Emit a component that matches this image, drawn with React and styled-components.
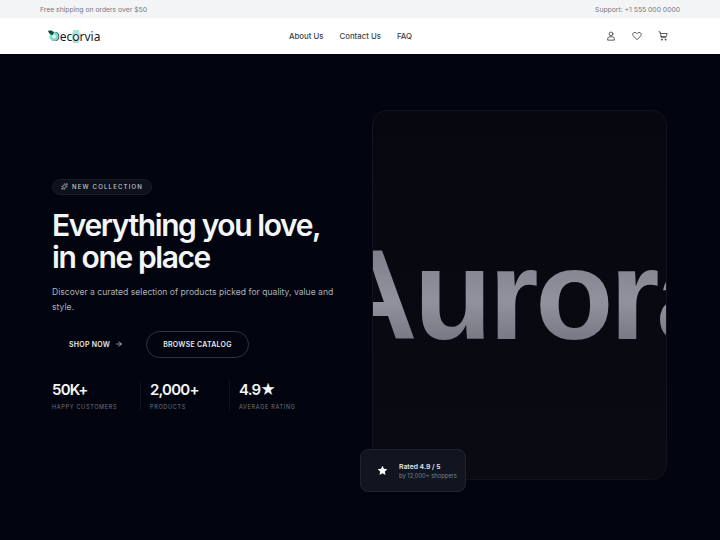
import React from 'react'
import styled, { createGlobalStyle } from 'styled-components'
import { ArrowRight, Sparkles } from 'lucide-react'

const Global = createGlobalStyle`
  html, body { margin: 0; padding: 0; }
  body { font-family: Inter, "Liberation Sans", sans-serif; background: #02050f; }
  * { box-sizing: border-box; }
`

const Page = styled.div`
  width: 720px;
  height: 540px;
  overflow: hidden;
  display: flex;
  flex-direction: column;
`
const TopBar = styled.div`
  height: 18px;
  flex: none;
  padding: 0 40px;
  display: flex;
  align-items: center;
  justify-content: space-between;
  background: #f3f4f6;
  color: #74787f;
  font-size: 6.8px;
`
const Nav = styled.nav`
  height: 36px;
  flex: none;
  padding: 0 52px 0 48px;
  display: grid;
  grid-template-columns: 241px auto 1fr;
  align-items: center;
  background: #fff;
`
const Logo = styled.div`
  position: relative;
  display: flex;
  align-items: center;
  width: 52px;
  padding-left: 3px;
  font-family: "Noto Sans", sans-serif;
  font-size: 12px;
  color: #16181d;
  svg { position: absolute; left: -1px; top: 0; }
`
const LogoDot = styled.span`
  border-radius: 50%;
  background: radial-gradient(circle, #fff 0 30%, #a5e6d5 32% 70%, transparent 72%);
`
const Links = styled.div`
  display: flex;
  gap: 16px;
  a {
    font-size: 7.8px;
    font-weight: 500;
    color: #3b3f46;
    text-decoration: none;
  }
`
const NavIcons = styled.div`
  display: flex;
  justify-content: flex-end;
  gap: 16px;
  color: #27272a;
`
const Hero = styled.main`
  flex: 1;
  display: grid;
  grid-template-columns: 320px 295px;
  justify-content: space-between;
  align-items: center;
  padding: 56px 53px 60px 52px;
  background: #02050f;
`
const Copy = styled.div`
  display: flex;
  flex-direction: column;
  align-items: flex-start;
  margin-top: -2px;
`
const Badge = styled.div`
  height: 16px;
  padding: 0 8px;
  display: flex;
  align-items: center;
  gap: 4px;
  border-radius: 8px;
  background: #0d111b;
  border: 1px solid #191d28;
  color: #c6c8ce;
  font-size: 6px;
  font-weight: 500;
  letter-spacing: 1.2px;
`
const Title = styled.h1`
  margin: 14px 0 0;
  font-size: 30px;
  line-height: 32px;
  font-weight: 600;
  letter-spacing: -1.4px;
  color: #f4f5f7;
`
const Lead = styled.p`
  margin: 12px 0 0;
  width: 290px;
  font-size: 8.6px;
  line-height: 15px;
  color: #adb0b8;
`
const Actions = styled.div`
  margin-top: 16px;
  display: flex;
  align-items: center;
  gap: 6px;
`
const Button = styled.a`
  height: 27px;
  padding: 0 16px;
  display: flex;
  align-items: center;
  gap: 5px;
  border-radius: 14px;
  border: 1px solid ${p => (p.$outline ? '#30343f' : 'transparent')};
  color: #e5e7eb;
  font-size: 7px;
  font-weight: 600;
  letter-spacing: 0.25px;
`
const Stats = styled.div`
  margin-top: 23px;
  display: grid;
  grid-template-columns: 89px 89px auto;
`
const Stat = styled.div`
  border-right: 1px solid #11141d;
  & + & { padding-left: 9px; }
  &:last-child { border: 0; }
  strong {
    display: block;
    font-size: 15px;
    line-height: 18px;
    font-weight: 600;
    letter-spacing: -0.8px;
    color: #f4f5f7;
  }
  span {
    display: block;
    margin-top: 5px;
    font-size: 5.5px;
    letter-spacing: 0.7px;
    color: #70747f;
  }
`
const Visual = styled.div`
  position: relative;
  height: 370px;
`
const Frame = styled.div`
  height: 100%;
  padding-left: 10px;
  border-radius: 15px;
  border: 1px solid #10141c;
  background: linear-gradient(180deg, #06070f, #0a0b12);
  overflow: hidden;
  display: flex;
  align-items: center;
  justify-content: center;
`
const Word = styled.div`
  font-family: "Liberation Sans", sans-serif;
  font-size: 128px;
  font-weight: 700;
  line-height: 1;
  letter-spacing: -0.027em;
  background: linear-gradient(180deg, #80808c 15%, #92929e 55%, #797985 85%);
  -webkit-background-clip: text;
  background-clip: text;
  -webkit-text-fill-color: transparent;
`
const RatingCard = styled.div`
  position: absolute;
  left: -12px;
  bottom: -12px;
  width: 106px;
  height: 43px;
  padding-left: 16px;
  display: flex;
  align-items: center;
  gap: 11px;
  border-radius: 8px;
  border: 1px solid #1f2430;
  background: #10151f;
`
const RatingText = styled.div`
  b {
    display: block;
    font-size: 6.8px;
    font-weight: 600;
    color: #e5e7eb;
  }
  span {
    display: block;
    margin-top: 1px;
    font-size: 5.8px;
    color: #7c8190;
  }
`

function LogoMark() {
  return (
    <svg width="13" height="14" viewBox="0 0 13 14" aria-hidden="true">
      <circle cx="7" cy="8.5" r="4.5" fill="#7fdcc4" />
      <circle cx="7" cy="8.5" r="2" fill="#d6f5ec" />
      <path d="M1 3c2.500-1 4.500-.5 6 1.500L5.500 7C3.500 7 2 5.500 1 3z" fill="#0f4d44" />
    </svg>
  )
}

function UserIcon() {
  return (
    <svg width="10" height="10" viewBox="0 0 24 24" fill="none" stroke="currentColor" strokeWidth="1.8" strokeLinecap="round">
      <circle cx="12" cy="7" r="4.500" />
      <path d="M4 21v-2a5 5 0 0 1 5-5h6a5 5 0 0 1 5 5v2z" />
    </svg>
  )
}

function HeartIcon() {
  return (
    <svg width="10" height="10" viewBox="0 0 24 24" fill="none" stroke="currentColor" strokeWidth="1.8" strokeLinejoin="round">
      <path d="M12 21L3 11.500C.5 8.500 2 3.500 7 3.500c2.500 0 4 1.500 5 3 1-1.500 2.500-3 5-3 5 0 6.500 5 4 8z" />
    </svg>
  )
}

function CartIcon() {
  return (
    <svg width="10" height="10" viewBox="0 0 24 24" fill="none" stroke="currentColor" strokeWidth="1.8" strokeLinecap="round" strokeLinejoin="round">
      <path d="M2 2h3l3 14h11" />
      <path d="M6 6h16l-2 7H7.500" />
      <circle cx="9" cy="21" r="1" />
      <circle cx="18" cy="21" r="1" />
    </svg>
  )
}

export default function App() {
  return (
    <Page>
      <Global />
      <TopBar>
        <span>Free shipping on orders over $50</span>
        <span>Support: +1 555 000 0000</span>
      </TopBar>
      <Nav>
        <Logo><LogoMark />Dec<LogoDot>o</LogoDot>rvia</Logo>
        <Links>
          <a href="#">About Us</a>
          <a href="#">Contact Us</a>
          <a href="#">FAQ</a>
        </Links>
        <NavIcons>
          <UserIcon />
          <HeartIcon />
          <CartIcon />
        </NavIcons>
      </Nav>
      <Hero>
        <Copy>
          <Badge><Sparkles size={7} />NEW COLLECTION</Badge>
          <Title>Everything you love,<br />in one place</Title>
          <Lead>Discover a curated selection of products picked for quality, value and style.</Lead>
          <Actions>
            <Button>SHOP NOW <ArrowRight size={8} /></Button>
            <Button $outline>BROWSE CATALOG</Button>
          </Actions>
          <Stats>
            <Stat><strong>50K+</strong><span>HAPPY CUSTOMERS</span></Stat>
            <Stat><strong>2,000+</strong><span>PRODUCTS</span></Stat>
            <Stat><strong>4.9★</strong><span>AVERAGE RATING</span></Stat>
          </Stats>
        </Copy>
        <Visual>
          <Frame><Word>Aurora</Word></Frame>
          <RatingCard>
            <svg width="11" height="11" viewBox="0 0 24 24" fill="#fff"><path d="M12 1.500l3.200 6.900 7.300.9-5.400 5.100 1.400 7.400L12 18.200l-6.500 3.600 1.400-7.400L1.500 9.300l7.300-.9z" /></svg>
            <RatingText>
              <b>Rated 4.9 / 5</b>
              <span>by 12,000+ shoppers</span>
            </RatingText>
          </RatingCard>
        </Visual>
      </Hero>
    </Page>
  )
}
